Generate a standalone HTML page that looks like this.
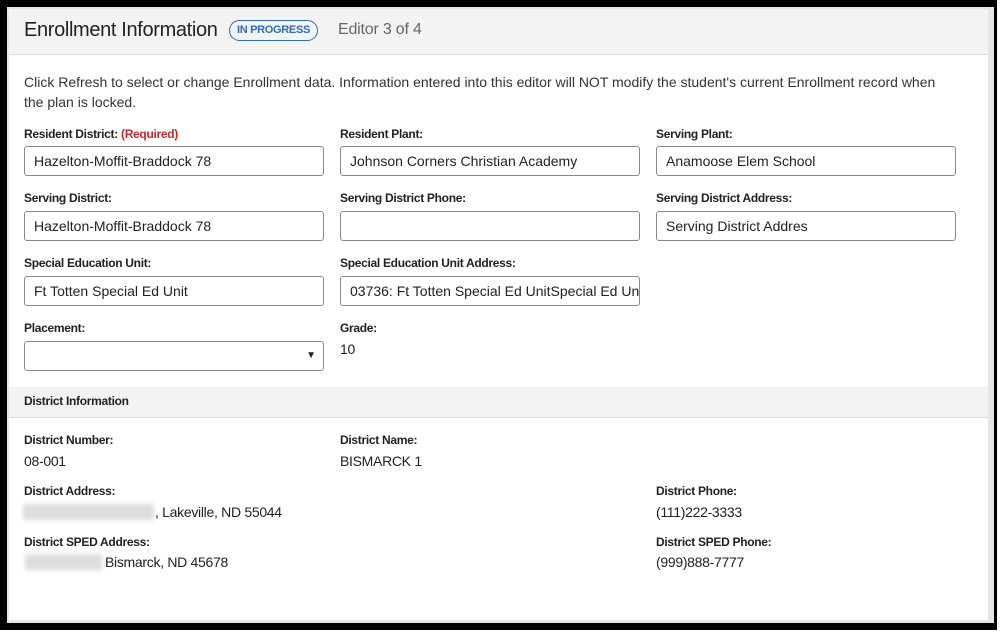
<!DOCTYPE html>
<html><head><meta charset="utf-8"><style>
*{margin:0;padding:0;box-sizing:border-box}
body{width:1002px;height:633px;background:#fff;position:relative;overflow:hidden;font-family:"Liberation Sans",sans-serif;color:#222}
.blk{position:absolute;left:0;top:0;width:997px;height:630px;background:#000}
.gr{position:absolute;left:7px;top:7px;width:987px;height:616px;background:#e6e6e6}
.pn{position:absolute;left:9px;top:9px;width:979px;height:611px;background:#fff}
.hd{position:absolute;left:9px;top:9px;width:979px;height:46px;background:#f3f3f3;border-bottom:1px solid #dcdcdc}
.a{position:absolute;white-space:nowrap}
.t{font-size:20px;color:#222;top:19px;left:24px;letter-spacing:-0.35px}
.badge{left:229px;top:20px;width:89px;height:21px;border:1px solid #2e6db4;border-radius:11px;color:#2e6db4;font-size:11px;font-weight:bold;text-align:center;line-height:19px;letter-spacing:-0.3px}
.ed{left:338px;top:21px;font-size:16px;color:#666;letter-spacing:-0.2px}
.p{left:24px;font-size:14px;color:#333;line-height:21px}
.l{font-size:12px;font-weight:bold;letter-spacing:-0.3px;color:#222}
.req{color:#c62828}
.in{position:absolute;width:300px;height:30px;border:1px solid #8a8a8a;border-radius:3px;font-size:14px;line-height:28px;padding-left:9px;color:#222;overflow:hidden;white-space:nowrap}
.v{font-size:14px;color:#222;letter-spacing:-0.3px}
.band{position:absolute;left:9px;top:387px;width:979px;height:31px;background:#f3f3f3;border-bottom:1px solid #dcdcdc}
.blur{position:absolute;background:#ddd;filter:blur(2px)}
</style></head><body>
<div class="blk"></div><div class="gr"></div><div class="pn"></div><div class="hd"></div>
<div class="a t">Enrollment Information</div>
<div class="a badge">IN PROGRESS</div>
<div class="a ed">Editor 3 of 4</div>
<div class="a p" style="top:72px">Click Refresh to select or change Enrollment data. Information entered into this editor will NOT modify the student's current Enrollment record when</div>
<div class="a p" style="top:92px">the plan is locked.</div>

<div class="a l" style="left:24px;top:127px">Resident District: <span class="req">(Required)</span></div>
<div class="a l" style="left:340px;top:127px">Resident Plant:</div>
<div class="a l" style="left:656px;top:127px">Serving Plant:</div>
<div class="in" style="left:24px;top:146px">Hazelton-Moffit-Braddock 78</div>
<div class="in" style="left:340px;top:146px">Johnson Corners Christian Academy</div>
<div class="in" style="left:656px;top:146px">Anamoose Elem School</div>

<div class="a l" style="left:24px;top:191px">Serving District:</div>
<div class="a l" style="left:340px;top:191px">Serving District Phone:</div>
<div class="a l" style="left:656px;top:191px">Serving District Address:</div>
<div class="in" style="left:24px;top:211px">Hazelton-Moffit-Braddock 78</div>
<div class="in" style="left:340px;top:211px"></div>
<div class="in" style="left:656px;top:211px">Serving District Addres</div>

<div class="a l" style="left:24px;top:256px">Special Education Unit:</div>
<div class="a l" style="left:340px;top:256px">Special Education Unit Address:</div>
<div class="in" style="left:24px;top:276px">Ft Totten Special Ed Unit</div>
<div class="in" style="left:340px;top:276px">03736: Ft Totten Special Ed UnitSpecial Ed Unit</div>

<div class="a l" style="left:24px;top:321px">Placement:</div>
<div class="a l" style="left:340px;top:321px">Grade:</div>
<div class="in" style="left:24px;top:341px"><span style="position:absolute;right:7px;top:0;font-size:10px">&#9660;</span></div>
<div class="a v" style="left:340px;top:341px">10</div>

<div class="band"></div>
<div class="a l" style="left:24px;top:394px">District Information</div>

<div class="a l" style="left:24px;top:433px">District Number:</div>
<div class="a l" style="left:340px;top:433px">District Name:</div>
<div class="a v" style="left:24px;top:453px">08-001</div>
<div class="a v" style="left:340px;top:453px">BISMARCK 1</div>

<div class="a l" style="left:24px;top:484px">District Address:</div>
<div class="a l" style="left:656px;top:484px">District Phone:</div>
<div class="blur" style="left:23px;top:504px;width:131px;height:16px"></div>
<div class="a v" style="left:155px;top:504px">, Lakeville, ND 55044</div>
<div class="a v" style="left:656px;top:504px">(111)222-3333</div>

<div class="a l" style="left:24px;top:535px">District SPED Address:</div>
<div class="a l" style="left:656px;top:535px">District SPED Phone:</div>
<div class="blur" style="left:25px;top:554px;width:77px;height:16px"></div>
<div class="a v" style="left:105px;top:554px">Bismarck, ND 45678</div>
<div class="a v" style="left:656px;top:554px">(999)888-7777</div>
</body></html>
